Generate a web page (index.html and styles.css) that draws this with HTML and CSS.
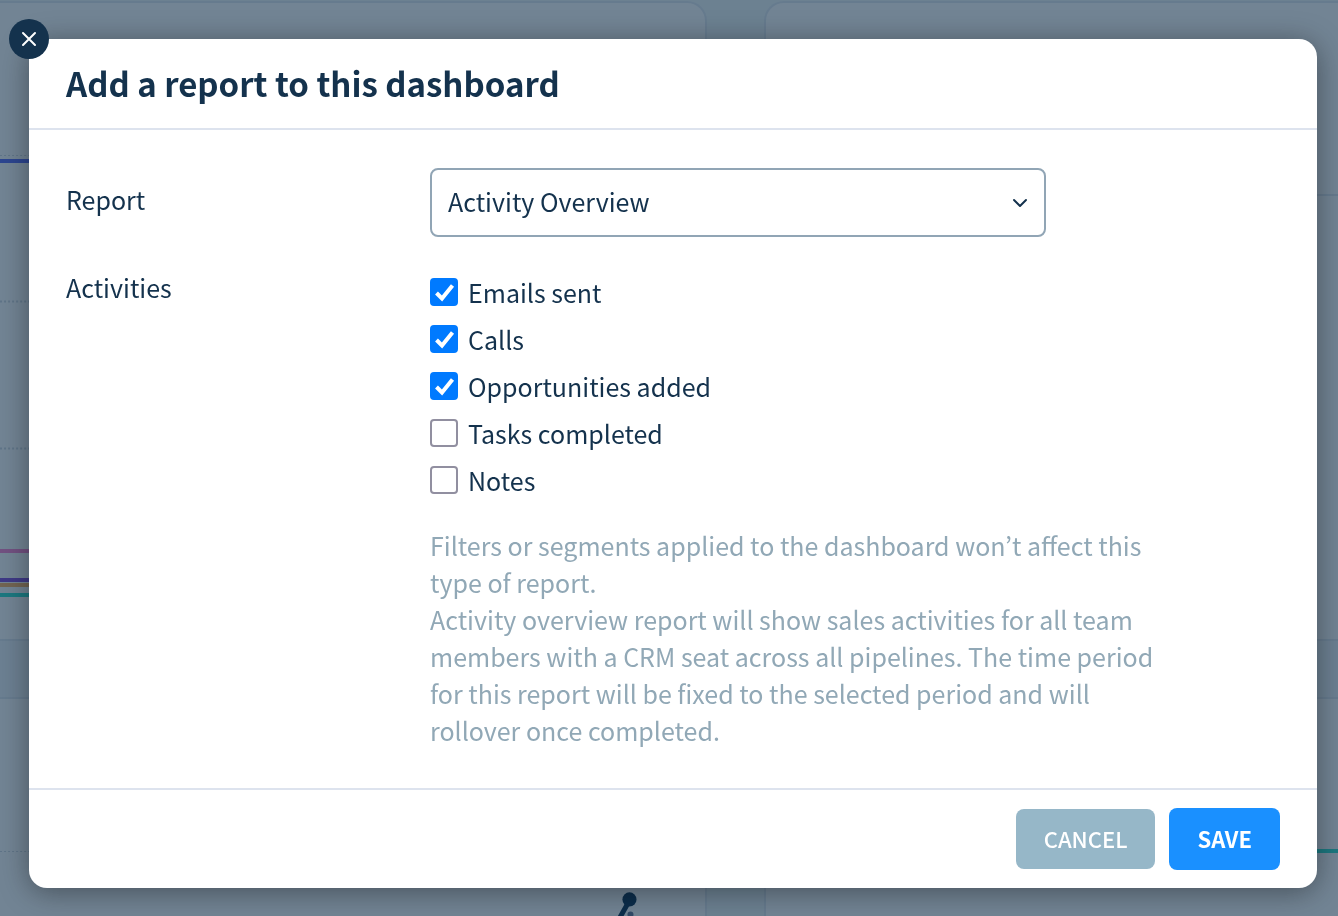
FILE: index.html
```html
<!DOCTYPE html>
<html lang="en">

<head>
    <meta charset="utf-8">
    <title>Add a report to this dashboard</title>
    <link rel="stylesheet" href="styles.css">
</head>

<body>
    <div class="dashboard" aria-hidden="true">
        <div class="panel panel-left">
            <svg class="chart" viewBox="0 0 700 636" preserveAspectRatio="none">
                <path class="grid-line" d="M0 152.500H700" />
                <path class="grid-line thick" d="M0 298.500H700M0 445.500H700" />
                <path class="series" stroke="#5264f5" d="M0 158H700" />
                <path class="series" stroke="#ff80d0" d="M0 548H700" />
                <path class="series" stroke="#ffb15c" d="M0 582H700" />
                <path class="series" stroke="#7f46dc" d="M0 577H700" />
                <path class="series" stroke="#2ae1cd" d="M0 592H700" />
            </svg>
            <div class="band"></div>
            <svg class="chart-small" viewBox="0 0 700 220" preserveAspectRatio="xMaxYMin slice">
                <path class="grid-line" d="M0 151.500H700" />
                <path class="node-line" d="M625 200L611 225" />
                <circle class="node" cx="625" cy="199" r="7" />
                <circle class="node-small" cx="626" cy="214" r="3" />
            </svg>
        </div>
        <div class="panel panel-right">
            <div class="panel-head"></div>
            <div class="panel-space"></div>
            <div class="band"></div>
            <svg class="chart-small" viewBox="0 0 570 220" preserveAspectRatio="none">
                <path class="series" stroke="#2ae1cd" d="M0 152H570" />
            </svg>
        </div>
    </div>

    <div class="overlay">
        <form class="modal" role="dialog" aria-labelledby="modalTitle">
            <button type="button" class="close" aria-label="Close">
                <svg width="16" height="16" viewBox="0 0 16 16">
                    <path d="M2 2L14 14M14 2L2 14" />
                </svg>
            </button>
            <header class="modal-header">
                <h1 id="modalTitle">Add a report to this dashboard</h1>
            </header>

            <div class="modal-body">
                <label class="field-label report-label" for="report">Report</label>
                <div class="select-box">
                    <select id="report">
                        <option>Activity Overview</option>
                    </select>
                    <svg class="arrow" width="16" height="10" viewBox="0 0 16 10">
                        <path d="M2 2L8 8L14 2" />
                    </svg>
                </div>

                <div class="field-label" id="activitiesLabel">Activities</div>
                <div>
                    <div class="checks" role="group" aria-labelledby="activitiesLabel">
                        <label class="check"><input type="checkbox" checked>Emails sent</label>
                        <label class="check"><input type="checkbox" checked>Calls</label>
                        <label class="check"><input type="checkbox" checked>Opportunities added</label>
                        <label class="check"><input type="checkbox">Tasks completed</label>
                        <label class="check"><input type="checkbox">Notes</label>
                    </div>
                    <p class="help">Filters or segments applied to the dashboard won’t affect this type of report.<br>
                        Activity overview report will show sales activities for all team members with a CRM seat across all pipelines. The time period for this report will be fixed to the selected period and will rollover once completed.</p>
                </div>
            </div>

            <footer class="modal-footer">
                <button type="button" class="btn btn-cancel">CANCEL</button>
                <button type="submit" class="btn btn-save">SAVE</button>
            </footer>
        </form>
    </div>
</body>

</html>
```
FILE: styles.css
```css
* {
    box-sizing: border-box;
}

body {
    margin: 0;
    height: 100vh;
    overflow: hidden;
    background-color: #f0f7f8;
    color: #14324d;
    font-family: "Noto Sans CJK KR", "Noto Sans", sans-serif;
    font-size: 25px;
}

.dashboard {
    display: grid;
    grid-template-columns: 707fr 574fr;
    column-gap: 57px;
    padding-top: 1px;
}

.panel {
    background-color: #fff;
    border: 2px solid #e1e8f0;
    overflow: hidden;
}

.panel-left {
    border-left: none;
    border-radius: 0 20px 0 0;
}

.panel-right {
    border-right: none;
    border-radius: 20px 0 0 0;
}

.chart {
    display: block;
    width: 100%;
    height: 636px;
}

.chart-small {
    display: block;
    width: 100%;
    height: 220px;
}

.panel-head {
    height: 193px;
    border-bottom: 2px solid #e1e8f0;
}

.panel-space {
    height: 443px;
}

.band {
    height: 60px;
    background-color: #f0f5f9;
    border-top: 2px solid #e1e8f0;
    border-bottom: 2px solid #e1e8f0;
}

.grid-line {
    stroke: #d0d8e0;
    stroke-width: 1;
    stroke-dasharray: 2 2;
}

.grid-line.thick {
    stroke-width: 2;
}

.series {
    stroke-width: 4;
}

.node-line {
    stroke: #00284a;
    stroke-width: 5;
}

.node {
    fill: #00284a;
}

.node-small {
    fill: #5f6f90;
}

.overlay {
    position: fixed;
    inset: 0;
    padding: 39px 21px 28px 29px;
    background-color: rgba(20, 50, 77, 0.6);
}

.modal {
    position: relative;
    display: flex;
    flex-direction: column;
    min-height: 100%;
    background-color: #fff;
    border-radius: 18px;
    box-shadow: 0 4px 30px rgba(0, 0, 0, 0.4);
}

.close {
    position: absolute;
    top: -20px;
    left: -20px;
    display: flex;
    align-items: center;
    justify-content: center;
    width: 40px;
    height: 40px;
    padding: 0;
    border: none;
    border-radius: 50%;
    background-color: #14324d;
    cursor: pointer;
}

.close path,
.arrow path {
    fill: none;
    stroke: #fff;
    stroke-width: 2;
    stroke-linecap: round;
    stroke-linejoin: round;
}

.modal-header {
    padding: 19px 37px 20px;
    border-bottom: 2px solid #dde3ee;
}

h1 {
    margin: 0;
    font-size: 33px;
    line-height: 50px;
    font-weight: 700;
}

.modal-body {
    flex: 1;
    display: grid;
    grid-template-columns: 364px 1fr;
    align-content: start;
    row-gap: 31px;
    padding: 38px 37px;
}

.field-label {
    line-height: 38px;
}

.report-label {
    padding-top: 12px;
}

.select-box {
    position: relative;
    max-width: 616px;
}

select {
    appearance: none;
    display: block;
    width: 100%;
    height: 69px;
    padding: 0 16px 3px;
    border: 2px solid #91a5b5;
    border-radius: 8px;
    background-color: #fff;
    color: inherit;
    font: inherit;
}

.arrow {
    position: absolute;
    top: 30px;
    right: 18px;
    pointer-events: none;
}

.arrow path {
    stroke: #14324d;
}

.check {
    display: flex;
    align-items: center;
    gap: 10px;
    height: 47px;
}

.check input {
    appearance: none;
    width: 28px;
    height: 28px;
    margin: 0;
    border: 2px solid #918fa0;
    border-radius: 4px;
    background-color: #fff;
}

.check input:checked {
    border-color: #007aff;
    background: #007aff url("data:image/svg+xml,%3Csvg xmlns='http://www.w3.org/2000/svg' viewBox='0 0 24 24'%3E%3Cpath d='M4.500 13L10 18.500L20.500 5.500' fill='none' stroke='white' stroke-width='4'/%3E%3C/svg%3E") center / 24px no-repeat;
}

.help {
    max-width: 740px;
    margin: 24px 0 0;
    color: #91a8b6;
    line-height: 37px;
}

.modal-footer {
    display: flex;
    align-items: center;
    justify-content: flex-end;
    gap: 14px;
    padding: 18px 37px;
    border-top: 2px solid #dde3ee;
}

.btn {
    height: 60px;
    padding: 0 28px 3px;
    border: none;
    border-radius: 8px;
    color: #fff;
    font-family: inherit;
    font-size: 22px;
    font-weight: 500;
    cursor: pointer;
}

.btn-cancel {
    background-color: #96b7c8;
}

.btn-save {
    height: 62px;
    background-color: #1a90ff;
    font-weight: 700;
}
```
